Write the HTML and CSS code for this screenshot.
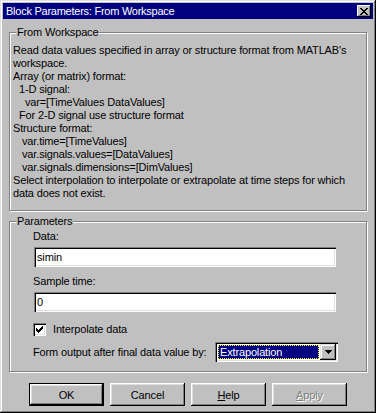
FILE: index.html
```html
<!DOCTYPE html>
<html>

<head>
    <title>Block Parameters: From Workspace</title>
    <meta charset="utf-8">
    <link rel="stylesheet" href="styles.css">
</head>

<body>
    <div class="window">
        <div class="titlebar">
            <span class="titel">Block Parameters: From Workspace</span>
            <span class="luk">
                <svg width="8" height="7" viewBox="0 0 8 7">
                    <path d="M0 0h2v1h1v1h2v-1h1v-1h2v1h-1v1h-1v1h-1v1h1v1h1v1h1v1h-2v-1h-1v-1h-2v1h-1v1h-2v-1h1v-1h1v-1h1v-1h-1v-1h-1v-1h-1z" fill="#000"/>
                </svg>
            </span>
        </div>

        <div class="indhold">
            <fieldset class="gruppe beskrivelse">
                <legend>From Workspace</legend>
                <div>Read data values specified in array or structure format from MATLAB's</div>
                <div>workspace.</div>
                <div>Array (or matrix) format:</div>
                <div class="ind2">1-D signal:</div>
                <div class="ind4">var=[TimeValues DataValues]</div>
                <div class="ind2">For 2-D signal use structure format</div>
                <div>Structure format:</div>
                <div class="ind3">var.time=[TimeValues]</div>
                <div class="ind3">var.signals.values=[DataValues]</div>
                <div class="ind3">var.signals.dimensions=[DimValues]</div>
                <div>Select interpolation to interpolate or extrapolate at time steps for which</div>
                <div>data does not exist.</div>
            </fieldset>

            <fieldset class="gruppe parametre">
                <legend>Parameters</legend>
                <div class="label">Data:</div>
                <div class="felt">simin</div>
                <div class="label afstand">Sample time:</div>
                <div class="felt">0</div>
                <div class="tjek">
                    <span class="boks">
                        <svg width="7" height="7" viewBox="0 0 7 7">
                            <path d="M6 0h1v3h-1v1h-1v1h-1v1h-1v1h-1v-1h-1v-1h-1v-3h1v1h1v1h1v-1h1v-1h1v-1h1z" fill="#000"/>
                        </svg>
                    </span>
                    <span>Interpolate data</span>
                </div>
                <div class="raekke">
                    <span>Form output after final data value by:</span>
                    <div class="combo">
                        <span class="valgt"><span class="fokus">Extrapolation</span></span>
                        <span class="pil">
                            <svg width="7" height="4" viewBox="0 0 7 4">
                                <path d="M0 0h7v1h-1v1h-1v1h-1v1h-1v-1h-1v-1h-1v-1h-1z" fill="#000"/>
                            </svg>
                        </span>
                    </div>
                </div>
            </fieldset>

            <div class="knapper">
                <button class="standard">OK</button>
                <button>Cancel</button>
                <button><u>H</u>elp</button>
                <button class="inaktiv"><u>A</u>pply</button>
            </div>
        </div>
    </div>
</body>

</html>
```

FILE: styles.css
```css
body {
    margin: 0;
    font-family: "Liberation Sans", Arial, sans-serif;
    font-size: 11px;
    line-height: 13px;
    letter-spacing: -0.15px;
    color: #000;
}

.window {
    width: 376px;
    height: 413px;
    box-sizing: border-box;
    padding: 3px;
    background: #c0c0c0;
    box-shadow: inset -1px -1px 0 #000, inset 1px 1px 0 #dfdfdf, inset -2px -2px 0 #808080, inset 2px 2px 0 #fff;
}

.titlebar {
    height: 16px;
    background: #000080;
    color: #fff;
    display: flex;
    align-items: center;
    padding-left: 3px;
}

.titel {
    flex: 1;
    line-height: 16px;
    letter-spacing: -0.25px;
}

.luk {
    width: 14px;
    height: 12px;
    margin-right: 2px;
    background: #c0c0c0;
    box-sizing: border-box;
    display: flex;
    align-items: center;
    justify-content: center;
    box-shadow: inset -1px -1px 0 #000, inset 1px 1px 0 #fff, inset -2px -2px 0 #808080;
}

.indhold {
    padding: 7px 6px 0 6px;
}

.gruppe {
    margin: 0;
    border: 1px solid #808080;
    box-shadow: 1px 1px 0 #fff, inset 1px 1px 0 #fff;
    min-width: 0;
}

.gruppe legend {
    padding: 0 1px;
    margin-left: 3px;
    background: #c0c0c0;
    line-height: 13px;
}

.beskrivelse {
    padding: 5px 4px 10px 3px;
}

.ind2 {
    padding-left: 6px;
}

.ind3 {
    padding-left: 9px;
}

.ind4 {
    padding-left: 12px;
}

.parametre {
    margin-top: 4px;
    padding: 2px 28px 9px 23px;
}

.parametre legend {
    margin-left: -17px;
}

.afstand {
    margin-top: 8px;
}

.felt {
    margin: 4px 0 0 1px;
    width: 302px;
    height: 20px;
    box-sizing: border-box;
    padding: 4px 3px 0 3px;
    background: #fff;
    box-shadow: inset 1px 1px 0 #808080, inset 2px 2px 0 #000, inset -1px -1px 0 #fff, inset -2px -2px 0 #dfdfdf;
}

.tjek {
    margin-top: 11px;
    display: flex;
    align-items: center;
    gap: 7px;
}

.boks {
    width: 13px;
    height: 13px;
    box-sizing: border-box;
    background: #fff;
    display: flex;
    align-items: center;
    justify-content: center;
    box-shadow: inset 1px 1px 0 #808080, inset 2px 2px 0 #000, inset -1px -1px 0 #fff, inset -2px -2px 0 #dfdfdf;
}

.raekke {
    margin-top: 6px;
    display: flex;
    align-items: center;
    justify-content: space-between;
}

.combo {
    width: 123px;
    height: 20px;
    box-sizing: border-box;
    padding: 2px;
    display: flex;
    background: #fff;
    box-shadow: inset 1px 1px 0 #808080, inset 2px 2px 0 #000, inset -1px -1px 0 #fff, inset -2px -2px 0 #dfdfdf;
}

.valgt {
    flex: 1;
    padding: 1px;
    display: flex;
}

.fokus {
    flex: 1;
    background: #000080;
    color: #fff;
    outline: 1px dotted #ffff00;
    outline-offset: -1px;
    padding-left: 2px;
    line-height: 14px;
}

.pil {
    width: 16px;
    height: 16px;
    box-sizing: border-box;
    background: #c0c0c0;
    display: flex;
    align-items: center;
    justify-content: center;
    box-shadow: inset -1px -1px 0 #000, inset 1px 1px 0 #dfdfdf, inset -2px -2px 0 #808080, inset 2px 2px 0 #fff;
}

.knapper {
    margin-top: 11px;
    display: flex;
    justify-content: center;
    gap: 6px;
}

.knapper button {
    width: 75px;
    height: 23px;
    padding: 0;
    border: none;
    background: #c0c0c0;
    font-family: "Liberation Sans", Arial, sans-serif;
    font-size: 11px;
    letter-spacing: -0.15px;
    color: #000;
    box-shadow: inset -1px -1px 0 #000, inset 1px 1px 0 #fff, inset -2px -2px 0 #808080, inset 2px 2px 0 #dfdfdf;
}

.knapper .standard {
    border: 1px solid #000;
}

.knapper .inaktiv {
    color: #808080;
    text-shadow: 1px 1px 0 #fff;
}
```
